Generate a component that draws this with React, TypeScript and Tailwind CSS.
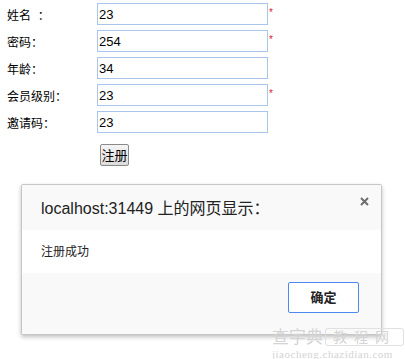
const FIELDS = [
  { label: "姓名\u00a0\u00a0：", value: "23", required: true },
  { label: "密码：", value: "254", required: true },
  { label: "年龄：", value: "34", required: false },
  { label: "会员级别：", value: "23", required: true },
  { label: "邀请码：", value: "23", required: false },
];

const FONT = "font-['Liberation_Sans','Noto_Sans_CJK_SC',sans-serif]";

export default function App() {
  return (
    <div className={`relative w-[405px] h-[359px] bg-white overflow-hidden text-black ${FONT}`}>
      {/* Form */}
      <div className="pt-[3px] flex flex-col gap-[5px]">
        {FIELDS.map((f) => (
          <div key={f.label} className="flex items-start h-[22px]">
            <span className="w-[97px] pl-[7px] text-[12px] leading-[22px] pt-[2px] whitespace-nowrap">{f.label}</span>
            <input
              readOnly
              value={f.value}
              className="w-[171px] h-[22px] border border-[#a9c5eb] px-px text-[13px] outline-none"
            />
            {f.required && (
              <span className="text-[#e0203a] text-[10px] leading-none mt-[5px] ml-px">*</span>
            )}
          </div>
        ))}
        <div className="pl-[100px] pt-[6px]">
          <button className="w-[29px] h-[22px] border border-[#8a8a8a] rounded-[2px] bg-gradient-to-b from-[#f4f4f4] to-[#dcdcdc] text-[13px] leading-none flex items-center justify-center">
            注册
          </button>
        </div>
      </div>

      {/* alert dialog */}
      <div className="absolute left-[21px] top-[184px] w-[361px] h-[151px] border border-[#c6c6c6] rounded-[2px] bg-white shadow-[0_2px_4px_rgba(0,0,0,0.25)] flex flex-col">
        <div className="h-[45px] bg-[#f9f9f9] flex items-center pl-[19px] pr-[12px] justify-between">
          <span className="text-[16px] text-[#222] pt-[3px]">localhost:31449 上的网页显示：</span>
          <svg width="9" height="9" viewBox="0 0 9 9" className="self-start mt-[12px]">
            <path d="M1 1L8 8M8 1L1 8" stroke="#6e6e6e" strokeWidth="2" />
          </svg>
        </div>
        <div className="h-[43px] flex items-center pl-[19px] text-[12px] text-[#222]">注册成功</div>
        <div className="flex-1 bg-[#f9f9f9] flex justify-end items-start pt-[9px] pr-[22px]">
          <button className="w-[71px] h-[31px] border border-[#4d88f2] rounded-[2px] bg-white text-[13px] font-bold text-[#222]">
            确定
          </button>
        </div>
      </div>

      {/* watermark */}
      <div className="absolute left-[272px] top-[328px] flex flex-col items-start text-[#d4d4d4] leading-none whitespace-nowrap">
        <div className="flex items-center gap-[2px] text-[17px]">
          <span>查字典</span>
          <span className="border border-[#e0e0e0] rounded-[3px] px-[7px] text-[14px] tracking-[7px] leading-[16px]">教程网</span>
        </div>
        <span className="text-[11px] mt-[3px] font-['Liberation_Serif',serif] tracking-[0.5px]">jiaocheng.chazidian.com</span>
      </div>
    </div>
  );
}
